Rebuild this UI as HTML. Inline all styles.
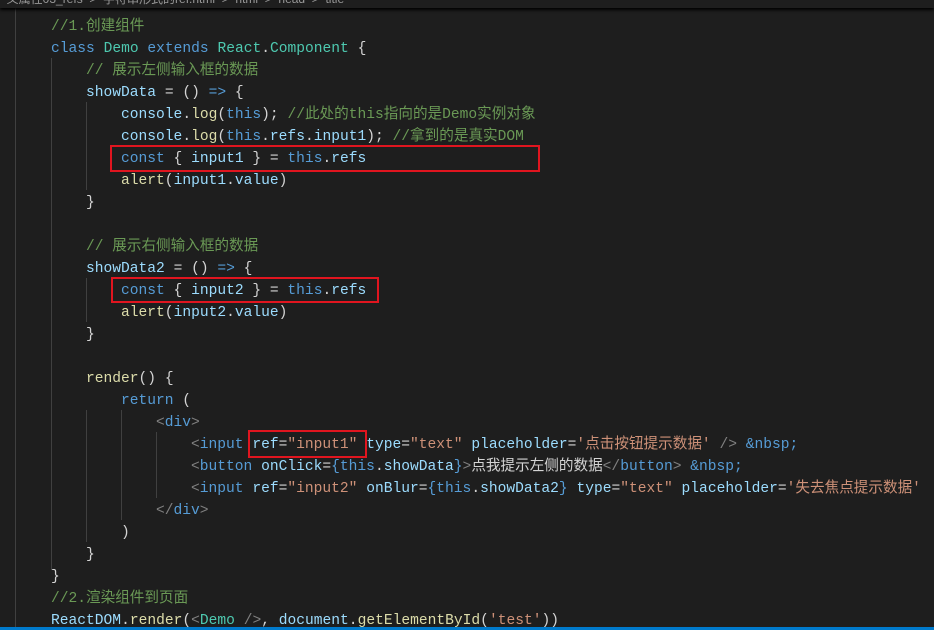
<!DOCTYPE html>
<html><head><meta charset="utf-8"><style>
html,body{margin:0;padding:0;background:#1e1e1e;width:934px;height:630px;overflow:hidden;position:relative}
.code{position:absolute;left:0;top:2px;font-family:"Liberation Mono","Noto Sans CJK SC",monospace;font-size:14.6px;color:#d4d4d4;white-space:pre}
.l{position:absolute;height:22px;line-height:22px}
.c{color:#6a9955}.k{color:#569cd6}.t{color:#4ec9b0}.f{color:#dcdcaa}.v{color:#9cdcfe}.s{color:#ce9178}.g{color:#808080}.p{color:#d4d4d4}
.guide{position:absolute;width:1px;background:#404040}
.box{position:absolute;border:2px solid #e0151f}
.top{position:absolute;left:0;top:0;width:934px;height:8px;background:#1e1e1e;box-shadow:0 2px 3px #000;overflow:hidden;font:12px "Liberation Sans","Noto Sans CJK SC",sans-serif;color:#999;white-space:pre}
</style></head><body>
<div class="guide" style="left:15px;top:8px;height:622px"></div>
<div class="guide" style="left:51px;top:58px;height:512px"></div>
<div class="guide" style="left:86px;top:102px;height:88px"></div>
<div class="guide" style="left:86px;top:278px;height:44px"></div>
<div class="guide" style="left:86px;top:410px;height:132px"></div>
<div class="guide" style="left:121px;top:410px;height:110px"></div>
<div class="guide" style="left:156px;top:432px;height:66px"></div>
<div class="top"><span style="position:relative;top:-10px">  义属性03_refs  &gt;  字符串形式的ref.html  &gt;  html  &gt;  head  &gt;  title</span></div>
<div class="code">
<div class="l" style="top:14px;left:51px"><span class="c">//1.创建组件</span></div>
<div class="l" style="top:36px;left:51px"><span class="k">class</span> <span class="t">Demo</span> <span class="k">extends</span> <span class="t">React</span>.<span class="t">Component</span> {</div>
<div class="l" style="top:58px;left:86px"><span class="c">// 展示左侧输入框的数据</span></div>
<div class="l" style="top:80px;left:86px"><span class="v">showData</span> = () <span class="k">=&gt;</span> {</div>
<div class="l" style="top:102px;left:121px"><span class="v">console</span>.<span class="f">log</span>(<span class="k">this</span>); <span class="c">//此处的this指向的是Demo实例对象</span></div>
<div class="l" style="top:124px;left:121px"><span class="v">console</span>.<span class="f">log</span>(<span class="k">this</span>.<span class="v">refs</span>.<span class="v">input1</span>); <span class="c">//拿到的是真实DOM</span></div>
<div class="l" style="top:146px;left:121px"><span class="k">const</span> { <span class="v">input1</span> } = <span class="k">this</span>.<span class="v">refs</span></div>
<div class="l" style="top:168px;left:121px"><span class="f">alert</span>(<span class="v">input1</span>.<span class="v">value</span>)</div>
<div class="l" style="top:190px;left:86px">}</div>
<div class="l" style="top:234px;left:86px"><span class="c">// 展示右侧输入框的数据</span></div>
<div class="l" style="top:256px;left:86px"><span class="v">showData2</span> = () <span class="k">=&gt;</span> {</div>
<div class="l" style="top:278px;left:121px"><span class="k">const</span> { <span class="v">input2</span> } = <span class="k">this</span>.<span class="v">refs</span></div>
<div class="l" style="top:300px;left:121px"><span class="f">alert</span>(<span class="v">input2</span>.<span class="v">value</span>)</div>
<div class="l" style="top:322px;left:86px">}</div>
<div class="l" style="top:366px;left:86px"><span class="f">render</span>() {</div>
<div class="l" style="top:388px;left:121px"><span class="k">return</span> (</div>
<div class="l" style="top:410px;left:156px"><span class="g">&lt;</span><span class="k">div</span><span class="g">&gt;</span></div>
<div class="l" style="top:432px;left:191px"><span class="g">&lt;</span><span class="k">input</span> <span class="v">ref</span>=<span class="s">"input1"</span> <span class="v">type</span>=<span class="s">"text"</span> <span class="v">placeholder</span>=<span class="s">'点击按钮提示数据'</span> <span class="g">/&gt;</span> <span class="k">&amp;nbsp;</span></div>
<div class="l" style="top:454px;left:191px"><span class="g">&lt;</span><span class="k">button</span> <span class="v">onClick</span>=<span class="k">{this</span>.<span class="v">showData</span><span class="k">}</span><span class="g">&gt;</span>点我提示左侧的数据<span class="g">&lt;/</span><span class="k">button</span><span class="g">&gt;</span> <span class="k">&amp;nbsp;</span></div>
<div class="l" style="top:476px;left:191px"><span class="g">&lt;</span><span class="k">input</span> <span class="v">ref</span>=<span class="s">"input2"</span> <span class="v">onBlur</span>=<span class="k">{this</span>.<span class="v">showData2</span><span class="k">}</span> <span class="v">type</span>=<span class="s">"text"</span> <span class="v">placeholder</span>=<span class="s">'失去焦点提示数据'</span></div>
<div class="l" style="top:498px;left:156px"><span class="g">&lt;/</span><span class="k">div</span><span class="g">&gt;</span></div>
<div class="l" style="top:520px;left:121px">)</div>
<div class="l" style="top:542px;left:86px">}</div>
<div class="l" style="top:564px;left:51px">}</div>
<div class="l" style="top:586px;left:51px"><span class="c">//2.渲染组件到页面</span></div>
<div class="l" style="top:608px;left:51px"><span class="v">ReactDOM</span>.<span class="f">render</span>(<span class="g">&lt;</span><span class="t">Demo</span> <span class="g">/&gt;</span>, <span class="v">document</span>.<span class="f">getElementById</span>(<span class="s">'test'</span>))</div>
</div>
<div class="box" style="left:110px;top:145px;width:426px;height:23px"></div>
<div class="box" style="left:111px;top:277px;width:264px;height:22px"></div>
<div class="box" style="left:248px;top:430px;width:115px;height:24px"></div>
<div style="position:absolute;left:0;top:627px;width:934px;height:3px;background:#007acc"></div>
</body></html>
